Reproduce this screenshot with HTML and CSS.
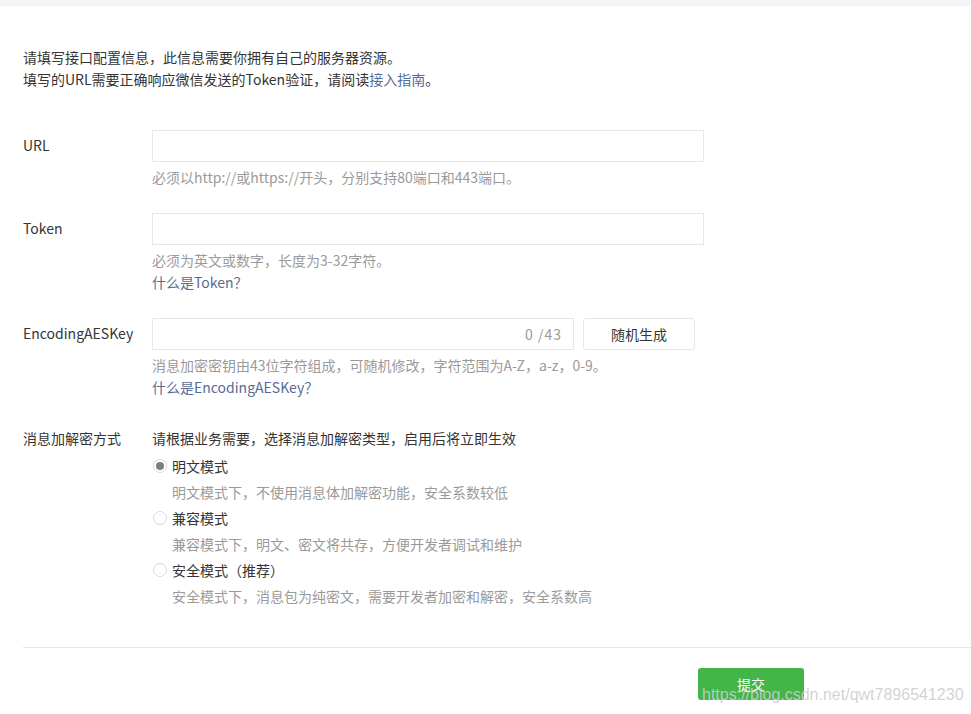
FILE: index.html
```html
<!DOCTYPE html>
<html lang="zh-CN">
<head>
<meta charset="utf-8">
<title>服务器配置</title>
<link rel="stylesheet" href="styles.css">
</head>
<body>
<div class="topbar"></div>
<div class="main">
  <div class="intro">
    <p>请填写接口配置信息，此信息需要你拥有自己的服务器资源。</p>
    <p>填写的URL需要正确响应微信发送的Token验证，请阅读<a class="link" href="#">接入指南</a>。</p>
  </div>

  <div class="form-row first">
    <label class="label">URL</label>
    <div class="value">
      <div class="input wide"></div>
      <p class="hint">必须以http://或https://开头，分别支持80端口和443端口。</p>
    </div>
  </div>

  <div class="form-row">
    <label class="label">Token</label>
    <div class="value">
      <div class="input wide"></div>
      <p class="hint">必须为英文或数字，长度为3-32字符。</p>
      <p class="hint"><a class="link" href="#">什么是Token？</a></p>
    </div>
  </div>

  <div class="form-row">
    <label class="label">EncodingAESKey</label>
    <div class="value">
      <div class="key-line">
        <div class="input key"><span class="counter">0 /43</span></div>
        <button class="btn-default" type="button">随机生成</button>
      </div>
      <p class="hint">消息加密密钥由43位字符组成，可随机修改，字符范围为A-Z，a-z，0-9。</p>
      <p class="hint"><a class="link" href="#">什么是EncodingAESKey？</a></p>
    </div>
  </div>

  <div class="form-row mode">
    <label class="label small">消息加解密方式</label>
    <div class="value">
      <p class="mode-desc">请根据业务需要，选择消息加解密类型，启用后将立即生效</p>
      <div class="options">
        <div class="option">
          <div class="option-line"><span class="radio checked"></span><span>明文模式</span></div>
          <p class="option-desc">明文模式下，不使用消息体加解密功能，安全系数较低</p>
        </div>
        <div class="option">
          <div class="option-line"><span class="radio"></span><span>兼容模式</span></div>
          <p class="option-desc">兼容模式下，明文、密文将共存，方便开发者调试和维护</p>
        </div>
        <div class="option">
          <div class="option-line"><span class="radio"></span><span>安全模式（推荐）</span></div>
          <p class="option-desc">安全模式下，消息包为纯密文，需要开发者加密和解密，安全系数高</p>
        </div>
      </div>
    </div>
  </div>

  <div class="divider"></div>
  <div class="footer">
    <button class="btn-primary" type="button">提交</button>
  </div>
</div>
<div class="watermark">https://blog.csdn.net/qwt7896541230</div>
</body>
</html>
```
FILE: styles.css
```css
html, body {
  margin: 0;
  padding: 0;
  background: #ffffff;
  overflow: hidden;
}
body {
  font-family: "Noto Sans CJK SC", "Noto Sans", sans-serif;
  font-size: 14px;
  color: #353535;
  position: relative;
  height: 714px;
}
p { margin: 0; }
.topbar {
  height: 6px;
  background: #f4f5f8;
  margin-right: 1px;
}
.main {
  padding-left: 23px;
}
.intro {
  margin-top: 40px;
  line-height: 22px;
}
.link {
  color: #576b95;
  text-decoration: none;
}
.form-row {
  display: flex;
  margin-top: 25px;
}
.form-row.first { margin-top: 40px; }
.form-row.mode { margin-top: 29px; }
.label {
  width: 129px;
  flex: none;
  line-height: 31px;
}
.label.small {
  line-height: 22px;
}
.value {
  display: flex;
  flex-direction: column;
}
.input {
  box-sizing: border-box;
  height: 32px;
  border: 1px solid #e7e7eb;
  background: #fff;
}
.input.wide { width: 552px; }
.key-line {
  display: flex;
  gap: 9px;
}
.input.key {
  width: 422px;
  display: flex;
  justify-content: flex-end;
  align-items: center;
  padding-right: 11px;
}
.counter {
  color: #9a9a9a;
  font-size: 14px;
  letter-spacing: 1px;
}
.btn-default {
  box-sizing: border-box;
  width: 112px;
  height: 32px;
  border: 1px solid #e4e8eb;
  border-radius: 3px;
  background: #fff;
  color: #353535;
  font-family: inherit;
  font-size: 14px;
  padding: 0;
}
.hint {
  line-height: 22px;
  color: #9a9a9a;
}
.input + .hint, .key-line + .hint { margin-top: 4px; }
.mode-desc {
  line-height: 22px;
}
.options {
  display: flex;
  flex-direction: column;
  gap: 4px;
  margin-top: 6px;
}
.option-line {
  display: flex;
  align-items: center;
  line-height: 22px;
  gap: 5px;
  padding-left: 1px;
}
.radio {
  box-sizing: border-box;
  width: 14px;
  height: 14px;
  border: 1px solid #dadada;
  border-radius: 50%;
  background: #fff;
  display: flex;
  align-items: center;
  justify-content: center;
}
.radio.checked::after {
  content: "";
  width: 8px;
  height: 8px;
  border-radius: 50%;
  background: #7d7d7d;
}
.option-desc {
  margin-top: 4px;
  padding-left: 20px;
  line-height: 22px;
  color: #9a9a9a;
}
.divider {
  margin-top: 40px;
  height: 1px;
  background: #e7e7eb;
}
.footer {
  padding-left: 675px;
  margin-top: 20px;
}
.btn-primary {
  width: 106px;
  height: 32px;
  border: none;
  border-radius: 3px;
  background: #44b549;
  color: #fff;
  font-family: inherit;
  font-size: 14px;
  padding: 0;
}
.watermark {
  position: absolute;
  left: 702px;
  top: 686px;
  font-family: "Liberation Sans", Arial, sans-serif;
  font-size: 16px;
  line-height: 18px;
  color: rgba(205, 205, 205, 0.88);
  white-space: nowrap;
}
```
